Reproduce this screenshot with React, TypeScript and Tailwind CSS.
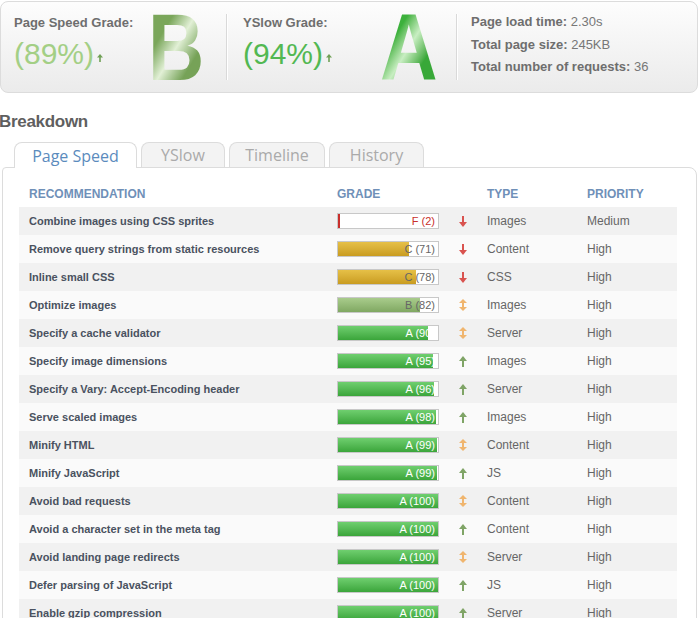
import React from "react";

type Grade = "A" | "B" | "C" | "F";
type Trend = "up" | "down" | "both";

interface Rule {
  name: string;
  grade: Grade;
  score: number;
  trend: Trend;
  type: string;
  priority: string;
}

const rules: Rule[] = [
  { name: "Combine images using CSS sprites", grade: "F", score: 2, trend: "down", type: "Images", priority: "Medium" },
  { name: "Remove query strings from static resources", grade: "C", score: 71, trend: "down", type: "Content", priority: "High" },
  { name: "Inline small CSS", grade: "C", score: 78, trend: "down", type: "CSS", priority: "High" },
  { name: "Optimize images", grade: "B", score: 82, trend: "both", type: "Images", priority: "High" },
  { name: "Specify a cache validator", grade: "A", score: 90, trend: "both", type: "Server", priority: "High" },
  { name: "Specify image dimensions", grade: "A", score: 95, trend: "up", type: "Images", priority: "High" },
  { name: "Specify a Vary: Accept-Encoding header", grade: "A", score: 96, trend: "up", type: "Server", priority: "High" },
  { name: "Serve scaled images", grade: "A", score: 98, trend: "up", type: "Images", priority: "High" },
  { name: "Minify HTML", grade: "A", score: 99, trend: "both", type: "Content", priority: "High" },
  { name: "Minify JavaScript", grade: "A", score: 99, trend: "up", type: "JS", priority: "High" },
  { name: "Avoid bad requests", grade: "A", score: 100, trend: "both", type: "Content", priority: "High" },
  { name: "Avoid a character set in the meta tag", grade: "A", score: 100, trend: "up", type: "Content", priority: "High" },
  { name: "Avoid landing page redirects", grade: "A", score: 100, trend: "both", type: "Server", priority: "High" },
  { name: "Defer parsing of JavaScript", grade: "A", score: 100, trend: "up", type: "JS", priority: "High" },
  { name: "Enable gzip compression", grade: "A", score: 100, trend: "up", type: "Server", priority: "High" },
];

const fillClass: Record<Grade, string> = {
  A: "bg-linear-to-b from-[#6fcf6f] to-[#3aa53a]",
  B: "bg-linear-to-b from-[#a9cc8c] to-[#80a862]",
  C: "bg-linear-to-b from-[#e6c047] to-[#c99c1f]",
  F: "bg-[#c9302c]",
};

const labelClass: Record<Grade, string> = {
  A: "text-white",
  B: "text-[#666]",
  C: "text-[#666]",
  F: "text-[#c9302c]",
};

function Arrow({ trend }: { trend: Trend }) {
  if (trend === "down") {
    return (
      <svg width="8" height="11" viewBox="0 0 8 11">
        <rect x="3" y="0" width="2" height="7" fill="#d9534f" />
        <polygon points="0,6 8,6 4,11" fill="#d9534f" />
      </svg>
    );
  }
  if (trend === "up") {
    return (
      <svg width="8" height="11" viewBox="0 0 8 11">
        <polygon points="4,0 8,5 0,5" fill="#7fa466" />
        <rect x="3" y="4" width="2" height="7" fill="#7fa466" />
      </svg>
    );
  }
  return (
    <svg width="8" height="12" viewBox="0 0 8 12">
      <polygon points="4,0 8,4 0,4" fill="#f0b56e" />
      <rect x="3" y="3" width="2" height="6" fill="#f0b56e" />
      <polygon points="0,8 8,8 4,12" fill="#f0b56e" />
    </svg>
  );
}

function SmallUp() {
  return (
    <svg width="6" height="8" viewBox="0 0 6 8" className="ml-[3px] mb-[9px]">
      <polygon points="3,0 6,3.5 0,3.5" fill="#6fa055" />
      <rect x="2.2" y="3" width="1.6" height="5" fill="#6fa055" />
    </svg>
  );
}

function GradeBar({ grade, score }: { grade: Grade; score: number }) {
  return (
    <div className="relative w-[102px] h-[16px] border border-[#c8c8c8] bg-white">
      <div className={`h-full ${fillClass[grade]}`} style={{ width: `${score}%` }} />
      <span
        className={`absolute inset-0 flex items-center justify-end pr-[3px] text-[11px] leading-none ${labelClass[grade]}`}
      >
        {grade} ({score})
      </span>
    </div>
  );
}

function Divider() {
  return <div className="self-center h-[66px] w-px bg-[#d9d9d9] border-r border-white box-content" />;
}

export default function App() {
  const font = { fontFamily: '"Liberation Sans", Arial, sans-serif' };
  const tabs = ["YSlow", "Timeline", "History"];
  const tabW = ["w-[84px]", "w-[96px]", "w-[95px]"];

  return (
    <div className="w-[699px] h-[618px] overflow-hidden bg-white" style={font}>
      {/* summary box */}
      <div className="mt-px w-[698px] h-[92px] flex border border-[#dcdcdc] rounded-[8px] bg-linear-to-b from-[#fdfdfd] to-[#ebebeb]">
        <div className="w-[225px] flex pl-[13px]">
          <div className="w-[134px] pt-[13px]">
            <div className="text-[13px] leading-[16px] font-bold text-[#6e6e6e]">Page Speed Grade:</div>
            <div className="mt-[6px] flex items-end">
              <span className="text-[30px] leading-[34px] text-[#a3cf85]">(89%)</span>
              <SmallUp />
            </div>
          </div>
          <div className="h-[86px] -mt-[2px]">
            <span className="inline-block origin-left scale-x-[0.82] text-[95px] leading-none font-bold bg-linear-to-br from-[#7aa65a] from-30% via-[#e2f0d6] via-50% to-[#76a257] to-72% bg-clip-text text-transparent">
              B
            </span>
          </div>
        </div>
        <Divider />
        <div className="w-[228px] flex pl-[15px]">
          <div className="w-[137px] pt-[13px]">
            <div className="text-[13px] leading-[16px] font-bold text-[#6e6e6e]">YSlow Grade:</div>
            <div className="mt-[6px] flex items-end">
              <span className="text-[30px] leading-[34px] text-[#52b852]">(94%)</span>
              <SmallUp />
            </div>
          </div>
          <div className="h-[86px] -mt-[2px]">
            <span className="inline-block origin-left scale-x-[0.84] text-[95px] leading-none font-bold bg-linear-to-br from-[#3cb13c] from-32% via-[#c8eec2] via-50% to-[#38a838] to-70% bg-clip-text text-transparent">
              A
            </span>
          </div>
        </div>
        <Divider />
        <div className="flex-1 pl-[13px] pt-[9px] text-[13px] leading-[22.5px] text-[#777]">
          <div>
            <span className="font-bold text-[#6e6e6e]">Page load time:</span> 2.30s
          </div>
          <div>
            <span className="font-bold text-[#6e6e6e]">Total page size:</span> 245KB
          </div>
          <div>
            <span className="font-bold text-[#6e6e6e]">Total number of requests:</span> 36
          </div>
        </div>
      </div>

      <h2 className="mt-[19px] -ml-[1px] text-[17px] leading-[20px] font-bold text-[#5f5f5f] tracking-[-0.3px]">
        Breakdown
      </h2>

      {/* tabs */}
      <div
        className="mt-[10px] ml-[14px] flex items-end gap-[4px] relative z-10"
        style={{ fontFamily: '"Open Sans", "DejaVu Sans", sans-serif' }}
      >
        <div className="w-[123px] h-[26px] -mb-px flex items-center justify-center border border-b-0 border-[#dcdcdc] rounded-t-[8px] bg-white text-[16px] text-[#5b8bbd]">
          Page Speed
        </div>
        {tabs.map((t, i) => (
          <div
            key={t}
            className={`${tabW[i]} h-[25px] flex items-center justify-center border border-b-0 border-[#dcdcdc] rounded-t-[8px] bg-[#f3f3f3] text-[16px] text-[#aaaaaa]`}
          >
            {t}
          </div>
        ))}
      </div>

      {/* panel */}
      <div className="ml-[2px] w-[695px] border border-[#dcdcdc] rounded-tr-[8px] rounded-tl-[4px] bg-white pt-[12px] pl-[16px] pr-[19px] pb-[20px]">
        <div className="flex items-center h-[27px] text-[12px] font-bold text-[#6f90b8]">
          <div className="w-[318px] pl-[10px]">RECOMMENDATION</div>
          <div className="w-[150px]">GRADE</div>
          <div className="w-[100px]">TYPE</div>
          <div>PRIORITY</div>
        </div>
        {rules.map((r, i) => (
          <div
            key={r.name}
            className={`flex items-center h-[28px] ${i % 2 === 0 ? "bg-[#f1f1f1]" : "bg-[#fafafa]"}`}
          >
            <div className="w-[318px] pl-[10px] text-[11px] font-bold text-[#4a5260]">{r.name}</div>
            <div className="w-[102px]">
              <GradeBar grade={r.grade} score={r.score} />
            </div>
            <div className="w-[48px] flex justify-center">
              <Arrow trend={r.trend} />
            </div>
            <div className="w-[100px] text-[12px] text-[#666]">{r.type}</div>
            <div className="text-[12px] text-[#666]">{r.priority}</div>
          </div>
        ))}
      </div>
    </div>
  );
}
